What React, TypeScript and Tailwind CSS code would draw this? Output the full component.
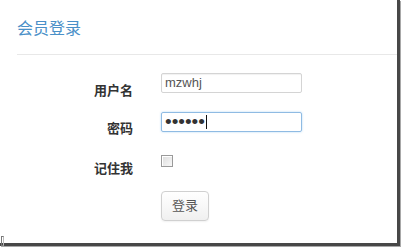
import React from "react";

const font = { fontFamily: '"Liberation Sans", "Noto Sans CJK SC", sans-serif' };

function Label({ text, pad }: { text: string; pad: string }) {
  return (
    <div className={`w-[116px] shrink-0 text-right text-[13px] leading-[18px] font-bold text-[#333] ${pad}`}>
      {text}
    </div>
  );
}

export default function App() {
  return (
    <div className="w-[405px] h-[251px] bg-white relative overflow-hidden" style={font}>
      <div className="w-[400px] h-[246px] bg-white border-r-[3px] border-b-[3px] border-[#474747] shadow-[1px_1px_0_#a8a8a8]">
        {/* Header */}
        <div className="ml-[17px] pt-[19px] pb-[15px] border-b border-[#e8e8e8]">
          <h2 className="text-[16px] leading-[20px] text-[#4a90c8]">会员登录</h2>
        </div>

        {/* Form */}
        <div className="pl-[17px] pt-[18px]">
          <div className="flex items-start">
            <Label text="用户名" pad="pt-[9px]" />
            <div className="ml-[28px] w-[141px] h-[20px] border border-[#d4d4d4] rounded-[2px] pl-[3px] text-[13px] leading-[18px] text-[#555] shadow-[inset_0_1px_1px_rgba(0,0,0,0.06)]">
              mzwhj
            </div>
          </div>

          <div className="flex items-start mt-[12px]">
            <Label text="密码" pad="pt-[8px]" />
            <div className="ml-[28px] w-[141px] h-[20px] border border-[#8fbbe3] rounded-[2px] pl-[3px] flex items-center shadow-[0_0_2px_rgba(82,168,236,0.5)]">
              <span className="text-[19px] leading-[18px] text-[#333]">••••••</span>
              <span className="w-px h-[14px] bg-[#111] ml-[1px]" />
            </div>
          </div>

          <div className="flex items-start mt-[17px]">
            <Label text="记住我" pad="pt-[5px]" />
            <div className="ml-[28px] w-[12px] h-[12px] border border-[#9a9a9a] bg-gradient-to-br from-[#dcdcdc] to-[#f8f8f8] shadow-[inset_1px_1px_0_#fff]" />
          </div>

          <div className="flex mt-[13px]">
            <div className="w-[116px] shrink-0" />
            <button className="ml-[28px] w-[48px] h-[30px] border border-[#d0d0d0] rounded-[4px] bg-gradient-to-b from-white to-[#f0f0f0] text-[13px] text-[#555] shadow-[0_1px_2px_rgba(0,0,0,0.06)]">
              登录
            </button>
          </div>
        </div>
      </div>

      {/* corner mark */}
      <div className="absolute left-[1px] top-[236px] w-[3px] h-[10px] border border-[#777] border-r-[#bbb]" />
    </div>
  );
}
